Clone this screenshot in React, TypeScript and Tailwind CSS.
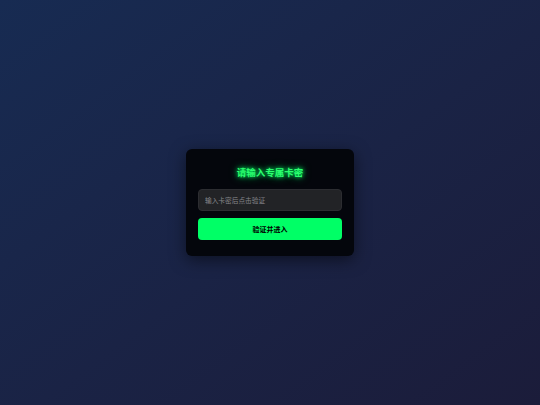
import React from "react";

export default function App() {
  return (
    <div
      className="w-[540px] h-[405px] flex items-center justify-center bg-gradient-to-br from-[#172b52] to-[#1b1c3a]"
      style={{ fontFamily: '"Noto Sans CJK SC", "Noto Sans", sans-serif' }}
    >
      <div className="w-[168px] rounded-[6px] bg-[#04060c] px-[12px] pt-[16px] pb-[16px] flex flex-col shadow-[0_4px_16px_rgba(0,0,0,0.5)]">
        <div className="text-center text-[9.5px] leading-[14px] font-bold text-[#2bff6e] [text-shadow:0_0_4px_#00ff66,0_0_8px_rgba(0,255,102,0.6)]">
          请输入专属卡密
        </div>
        <input
          className="mt-[10px] h-[22px] w-full rounded-[4px] bg-[#222326] border border-[#2c2d31] px-[6px] text-[6.7px] text-white placeholder:text-[#85868a] outline-none"
          placeholder="输入卡密后点击验证"
        />
        <button className="mt-[7px] h-[22px] w-full rounded-[4px] bg-[#00ff66] text-[7px] font-bold text-black">
          验证并进入
        </button>
      </div>
    </div>
  );
}
